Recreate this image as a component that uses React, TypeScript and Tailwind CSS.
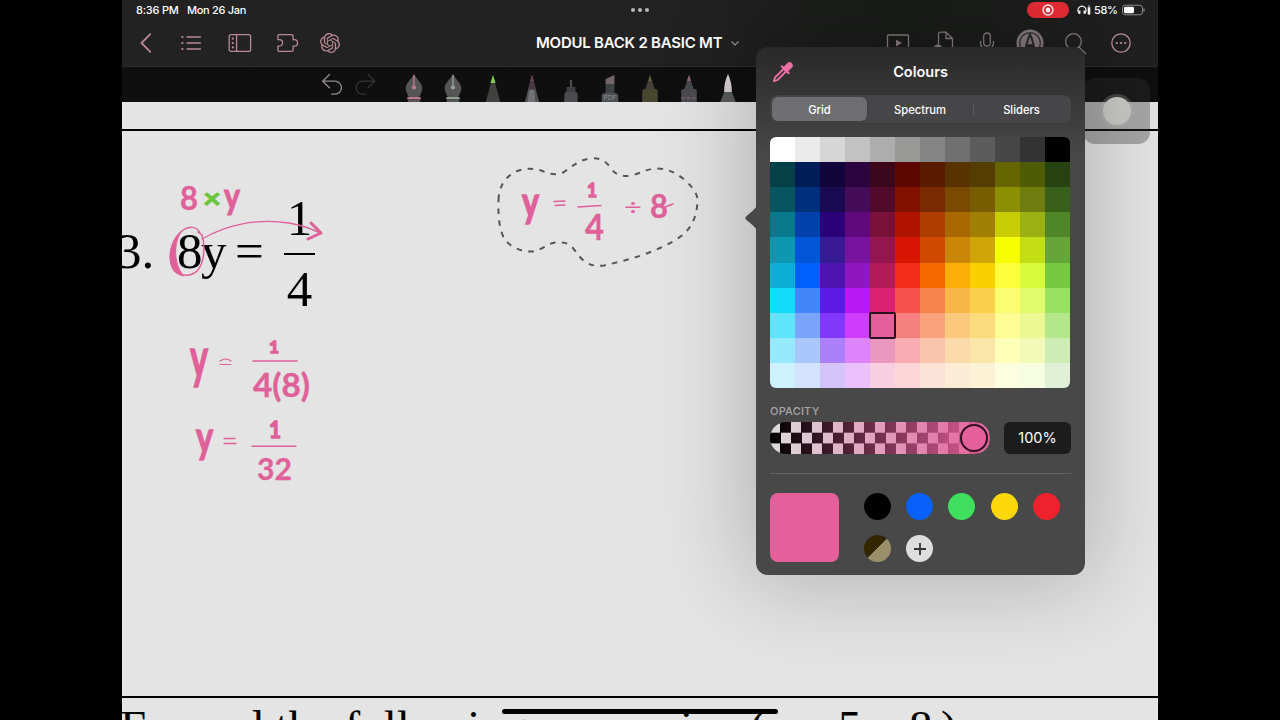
import type { ReactNode } from 'react'
import { SiOpenai } from 'react-icons/si'

const gridColors = [
  ['#ffffff', '#ebebeb', '#d6d6d6', '#c2c2c2', '#adadad', '#999997', '#858585', '#707070', '#5c5c5c', '#464646', '#333333', '#000000'],
  ['#053f47', '#001d57', '#11053b', '#2c053e', '#3a071b', '#5c0700', '#591c00', '#583300', '#533d00', '#666601', '#4e5c05', '#264210'],
  ['#07565f', '#002f7b', '#1a0a52', '#450d59', '#510a29', '#821100', '#7b2900', '#7a4a00', '#785d00', '#8d8f02', '#6f7c0e', '#38601a'],
  ['#08788c', '#0042a9', '#2c0077', '#60097d', '#791038', '#b01200', '#ad3e00', '#a96800', '#a17f04', '#c8cc03', '#9bb012', '#4f8628'],
  ['#0c98b0', '#0056d6', '#371a94', '#7a12a0', '#95154f', '#d81403', '#d14a00', '#cb8507', '#d0a508', '#f5ff00', '#c3de15', '#66a537'],
  ['#0caed6', '#0061fe', '#4d13b3', '#9016bf', '#b51a58', '#f22c17', '#f56900', '#fcaf08', '#f9d000', '#feff3a', '#d7fb3a', '#76c83f'],
  ['#12ddf8', '#4386fb', '#5a1ae3', '#b819f3', '#dc2073', '#f5524d', '#f4834e', '#f8b747', '#fad04a', '#fdfb70', '#e2fb6d', '#97e35f'],
  ['#5ee5fb', '#79a6fb', '#8238fb', '#cf3cfb', '#e5609b', '#f6807f', '#f9a37d', '#fac97d', '#fbdc7d', '#fffc94', '#ecf993', '#b3e78a'],
  ['#95ebfd', '#a9c6fb', '#ab80f8', '#dd83fb', '#ea98bd', '#f9adb3', '#fac5ac', '#fadaa9', '#fbe6a9', '#feffb8', '#f2fab8', '#cdedb5'],
  ['#cdf2fd', '#d3e2fd', '#d5c4fb', '#ebc1fd', '#f6cfe0', '#fbd6d8', '#fbe2d6', '#fcecd5', '#fcf2d5', '#fdfde0', '#f7fde0', '#e0f0d5'],
]

const selected = { row: 7, col: 4 }

function Icon({ className, children }: { className?: string; children: ReactNode }) {
  return (
    <svg
      viewBox="0 0 24 24"
      fill="none"
      stroke="currentColor"
      strokeWidth={1.3}
      strokeLinecap="round"
      strokeLinejoin="round"
      className={`w-6 h-6 shrink-0 ${className ?? ''}`}
    >
      {children}
    </svg>
  )
}

function StatusBar() {
  return (
    <div className="relative flex items-center h-5 text-[11px] text-white font-medium">
      <span className="ml-[14px] w-[43px] tracking-[-0.2px] whitespace-nowrap">8:36 PM</span>
      <span className="ml-2 w-[62px] tracking-[-0.3px] whitespace-nowrap">Mon 26 Jan</span>
      <div className="ml-[382px] flex gap-[3px]">
        <span className="w-1 h-1 rounded-full bg-[#b9b9b9]" />
        <span className="w-1 h-1 rounded-full bg-[#b9b9b9]" />
        <span className="w-1 h-1 rounded-full bg-[#b9b9b9]" />
      </div>
      <div className="ml-[378px] w-[42px] h-4 rounded-full bg-[#e92c35] flex items-center justify-center">
        <svg viewBox="0 0 12 12" className="w-3 h-3">
          <circle cx="6" cy="6" r="5" fill="none" stroke="white" strokeWidth="1.3" />
          <circle cx="6" cy="6" r="2.4" fill="white" />
        </svg>
      </div>
      <svg viewBox="0 0 14 12" className="ml-2 w-[14px] h-3" fill="none" stroke="white">
        <path d="M2.6 9.6A4.1 4.1 0 1 1 7.4 9.6" strokeWidth="1.2" />
        <path d="M2.5 6.6v3.2M7.5 6.6v3.2" strokeWidth="1.9" />
        <path d="M12 3.2v7.4" strokeWidth="2.6" />
        <path d="M12 1.4v1" strokeWidth="1.4" />
      </svg>
      <span className="ml-[3px] w-6 tracking-[-0.3px]">58%</span>
      <svg viewBox="0 0 24 12" className="ml-1 w-6 h-3">
        <rect x="0.5" y="1.2" width="20" height="9.6" rx="2.6" fill="none" stroke="#8a8a8a" />
        <rect x="2" y="2.7" width="10" height="6.6" rx="1.4" fill="white" />
        <path d="M22 4.5v3" stroke="#8a8a8a" strokeWidth="1.2" />
      </svg>
    </div>
  )
}

function NavBar() {
  return (
    <div className="flex items-center h-[46px] text-[#b98894]">
      <Icon className="ml-3">
        <path d="M16.3 3.2 7.5 12l8.8 8.8" strokeWidth={1.8} />
      </Icon>
      <Icon className="ml-[21px]">
        <path d="M8 6h13.5M8 12h13.5M8 18h13.5" />
        <path d="M3.4 6h.1M3.4 12h.1M3.4 18h.1" strokeWidth={2.2} />
      </Icon>
      <Icon className="ml-[25px]">
        <rect x="1.2" y="3.6" width="21.4" height="16.8" rx="2" />
        <path d="M8.6 3.6v16.8" />
        <path d="M4.8 7.6h.1M4.8 12h.1M4.8 16.4h.1" strokeWidth={2.2} />
      </Icon>
      <Icon className="ml-6">
        <path d="M3.4 3.6h12.2q1.5 0 1.5 1.5v3.6h1.2a3 3 0 0 1 0 6.4h-1.2v3.8q0 1.5-1.5 1.5H3.4q-1.5 0-1.5-1.5v-3.8h1.5a3.2 3.2 0 0 0 0-6.4H1.9V5.1q0-1.5 1.5-1.5Z" />
      </Icon>
      <SiOpenai className="ml-[18px] w-6 h-5 shrink-0" />
      <h1 className="ml-[194px] w-[187px] text-[15px] font-semibold text-white whitespace-nowrap tracking-[-0.24px]">
        MODUL BACK 2 BASIC MT
      </h1>
      <svg viewBox="0 0 12 12" className="ml-[6px] w-3 h-3" fill="none" stroke="#999" strokeWidth="1.1">
        <path d="M2.5 4.5 6 8l3.5-3.5" />
      </svg>
      <div className="flex items-center text-[#85797c]">
        <Icon className="ml-[145px]">
          <rect x="1.5" y="4" width="21" height="16" rx="1" />
          <path d="m10 8.5 6 3.5-6 3.5z" fill="currentColor" stroke="none" />
        </Icon>
        <Icon className="ml-[21px]">
          <path d="M7.5 13V3Q7.5 1.2 9.3 1.2H15l6.5 6.3V20H9" />
          <path d="M15 1.2v6.3h6.5" />
          <circle cx="7" cy="18" r="4.5" fill="currentColor" stroke="none" />
        </Icon>
        <Icon className="ml-5">
          <rect x="8.7" y="2" width="6.6" height="13" rx="3.3" />
          <path d="M5.5 10.5v1.5a6.5 6.5 0 0 0 13 0v-1.5M12 18.5V22" />
        </Icon>
        <svg viewBox="0 0 28 28" className="ml-[17px] w-7 h-7 shrink-0">
          <circle cx="14" cy="14" r="13.5" fill="currentColor" />
          <circle cx="14" cy="14" r="10.3" fill="none" stroke="#262626" strokeWidth="1.1" />
          <path d="M8.8 22 12.5 8.5 14 5.5l1.5 3L19.2 22" fill="none" stroke="#262626" strokeWidth="2" />
          <path d="M10.8 16q3.2-2 6.4 0v6h-6.4z" fill="#262626" />
        </svg>
        <Icon className="ml-[19px]">
          <circle cx="10.5" cy="10.5" r="7.8" />
          <path d="m16.2 16.2 6.5 6.5" />
        </Icon>
        <Icon className="ml-[22px] text-[#b98f99]">
          <circle cx="12" cy="12" r="9.2" />
          <path d="M7.8 12h.1M12 12h.1M16.2 12h.1" strokeWidth={2.2} />
        </Icon>
      </div>
    </div>
  )
}

function Fountain({ accent }: { accent: string }) {
  return (
    <>
      <path d="M10 0C8 5 2.5 9 2.5 14q0 4 3 9h9q3-5 3-9C17.5 9 12 5 10 0Z" fill="#555557" />
      <path d="M10 1v12" stroke={accent} strokeWidth="1.3" />
      <circle cx="10" cy="13.5" r="2" fill={accent} />
      <path d="M4 23h12v2.5H4z" fill={accent} />
      <path d="M4.5 26h11v2h-11z" fill="#555557" />
    </>
  )
}

const pens: ReactNode[] = [
  <Fountain accent="#b9798d" />,
  <Fountain accent="#8fa08f" />,
  <>
    <path d="M10 1 3.5 28h13z" fill="#3f413e" />
    <path d="m10 1-2.3 8h4.6z" fill="#86c95b" />
  </>,
  <>
    <path d="m10 1-6.5 27h13z" fill="#505054" />
    <path d="M7.5 16h4.5l1 12H6z" fill="#707175" />
    <path d="M10 1 6.5 16l3.5-1 3.5 1z" fill="#4b3a45" />
    <path d="m10 1-1.8 6h3.6z" fill="#6d3f55" />
  </>,
  <>
    <path d="M9 6h2v7H9z" fill="#4b4b4f" />
    <path d="M6 13h8v5H6z" fill="#3e3f43" />
    <path d="M4 28v-8q0-2 2-2h8q2 0 2 2v8z" fill="#4a4a4f" />
  </>,
  <>
    <path d="m6 5 8-4v9H6z" fill="#75656a" />
    <path d="M6 10h8v10H6z" fill="#3d4144" />
    <path d="M2.5 28v-6q0-3 3.5-3h8q3.5 0 3.5 3v6z" fill="#4d5054" />
    <text x="10" y="26.5" fontSize="6" textAnchor="middle" fill="#8d9094">PDF</text>
  </>,
  <>
    <path d="m10 1-4.5 15h9z" fill="#44413a" />
    <path d="M10 1 8.5 7h3z" fill="#666035" />
    <path d="M3 28V17q0-2 2-2h10q2 0 2 2v11z" fill="#47462f" />
  </>,
  <>
    <path d="m10 1-4.5 15h9z" fill="#48484d" />
    <path d="m10 1-2 6h4z" fill="#8b6573" />
    <path d="M3 28V17q0-2 2-2h10q2 0 2 2v11z" fill="#4a4a50" />
    <path d="M3 24h14" stroke="#b06b84" strokeWidth="1" strokeDasharray="3 2" />
  </>,
  <>
    <path d="M10 0Q6.5 8 6.5 18h7Q13.5 8 10 0Z" fill="#d8cfd1" />
    <path d="M6.5 18h7l3.5 10H3z" fill="#58595a" />
  </>,
]

function Toolbar() {
  return (
    <div className="flex h-9 bg-[#0f0f0f] border-t border-[#2c2c2c]">
      <Icon className="ml-[198px] mt-[5px] text-[#938b90]">
        <path d="M9.5 2.5 2.7 9.2l6.8 6.6M2.7 9.2H15a6.4 6.4 0 0 1 0 12.9h-3.5" />
      </Icon>
      <Icon className="ml-[10px] mt-[5px] text-[#343434]">
        <path d="m14 2.5 6.8 6.7L14 15.8M20.8 9.2H8.5a6.4 6.4 0 0 0 0 12.9H12" />
      </Icon>
      <div className="ml-[26px] flex items-end gap-[19.3px]">
        {pens.map((pen, i) => (
          <svg key={i} viewBox="1 0 18 28" className="w-5 h-[28px]" preserveAspectRatio="none">
            {pen}
          </svg>
        ))}
      </div>
    </div>
  )
}

// x and y give the left edge and the baseline, w the advance width
function Ink({ x, y, w, size, bold = 1, color = '#e0609a', children }: { x: number; y: number; w: number; size: number; bold?: number; color?: string; children: string }) {
  return (
    <text x={x} y={y} fontSize={size} textLength={w} lengthAdjust="spacingAndGlyphs" fill={color} stroke={color} strokeWidth={bold}>
      {children}
    </text>
  )
}

function InkLayer() {
  return (
    <svg
      viewBox="122 102 1036 618"
      className="absolute inset-0 w-full h-full font-['Lato',sans-serif] font-bold"
      fill="none"
      stroke="#e0609a"
      strokeLinecap="round"
    >
      <Ink x={180} y={209.5} w={18} size={32} bold={0.3}>8</Ink>
      <Ink x={203} y={207.5} w={18} size={27} color="#6cc63c">×</Ink>
      <Ink x={224} y={208.5} w={16} size={36}>y</Ink>
      <path
        d="M200 233C197 226 189 226 183 230C173 237 169 252 171 263C174 277 189 278 197 271C205 263 205 245 202 235L198 232"
        strokeWidth="1.5"
      />
      <path d="M181 232C170 241 167 259 173 269C176 274 180 275 184 276C175 267 172 246 181 232Z" fill="#e0609a" />
      <path d="M202 239C226 225 257 218 289 223Q306 226 320 233" strokeWidth="1.3" />
      <path d="m311 223 10 10-13 6" strokeWidth="3" strokeLinejoin="round" />

      <Ink x={190} y={378} w={18} size={55} bold={1.4}>y</Ink>
      <path d="M220 361q6-4 11 0M220 364.5h11" strokeWidth="1.2" />
      <Ink x={269} y={353} w={10} size={17} bold={1.4}>1</Ink>
      <path d="M253 361h44" strokeWidth="1.5" />
      <Ink x={253} y={396.5} w={57} size={33} bold={0.4}>4(8)</Ink>

      <Ink x={196} y={452.5} w={17} size={44} bold={1.4}>y</Ink>
      <path d="M224 438.5h11M224 443.5h12" strokeWidth="1.4" />
      <Ink x={269} y={438} w={12} size={23} bold={1.4}>1</Ink>
      <path d="M252 446.3h44" strokeWidth="1.5" />
      <Ink x={257} y={479.5} w={35} size={31} bold={0.3}>32</Ink>

      <Ink x={522} y={217} w={17} size={42} bold={1.4}>y</Ink>
      <path d="m554 201.5 11-.5M555 205.5l10-.5" strokeWidth="1.3" />
      <Ink x={587} y={196.5} w={10} size={18} bold={1.4}>1</Ink>
      <path d="m578 207 23-1.5" strokeWidth="1.5" />
      <Ink x={585} y={240} w={19} size={37} bold={0.3}>4</Ink>
      <g className="font-normal">
        <Ink x={624} y={215} w={18} size={23} bold={0}>÷</Ink>
      </g>
      <Ink x={650} y={218} w={18} size={33} bold={0.3}>8</Ink>
      <path d="m665 207 8-3" strokeWidth="1.5" />

      <path
        d="M498.5 200C499 187 504 179 513 173C524 167 536 168 545 172C552 175 558 175 564 172C573 166 579 160 590 158.5C601 157 606 162 611 168C615 175 622 177 632 175.5C641 173 648 168.5 657 168.5C671 169 679 175 687 182C695 190 698 195 697.5 203C696 218 692 226 684 234C674 242 661 248 648 253C635 258 619 262 604 265.5C592 267 585 263 580 257C573 249 572 243 561 242.5C548 241 544 250 532 251.5C521 252 511 247 505 240C499 230 498 215 498.5 200Z"
        stroke="#55555a"
        strokeWidth="2"
        strokeDasharray="5.5 6.3"
        strokeLinecap="butt"
      />
    </svg>
  )
}

function Worksheet() {
  return (
    <div className="relative h-[618px] overflow-hidden bg-[#e4e4e4] text-black font-['Liberation_Serif',serif] whitespace-nowrap">
      <div className="h-[29px] border-b-2 border-black" />
      <div className="h-[567px] pt-[62px] border-b-2 border-black flex items-start text-[51px] leading-none">
        <span className="-ml-[6px] mt-[33px] w-[61px]">3.</span>
        <span className="mt-[33px] w-[58px] tracking-[-1.5px]">8y</span>
        <span className="mt-[33px] w-[49px]">=</span>
        <div className="flex flex-col items-center w-[31px]">
          <span>1</span>
          <span className="mt-[9px] w-full h-0.5 bg-black" />
          <span className="mt-[9px]">4</span>
        </div>
      </div>
      <div className="-ml-[2px] flex text-[47px] leading-[1.26]">
        <span className="w-[630px]">Expand the following expression</span>
        <span className="w-[88px]">(</span>
        <span className="w-[71px]">5</span>
        <span className="w-[32px]">8</span>
        <span>)</span>
      </div>
      <InkLayer />
    </div>
  )
}

function ColourPopover() {
  return (
    <div className="absolute left-[634px] top-[47px] w-[329px] h-[528px] rounded-xl bg-linear-to-b from-[#292929] to-[#484848] to-[110px] shadow-[0_0_90px_10px_rgba(0,0,0,0.22)] px-[14px] text-white">
      <svg viewBox="0 0 13 26" className="absolute -left-[12px] top-[158px] w-[13px] h-[26px]" fill="#484848">
        <path d="M13 0v26Q12 23 9 20.5L2 14.5Q.5 13 2 11.5L9 5.5Q12 3 13 0Z" />
      </svg>
      <div className="relative h-12 flex items-center justify-center">
        <svg viewBox="0 0 24 24" className="absolute left-[1px] top-[13px] w-6 h-6 text-[#ee6fa6]" fill="none" stroke="currentColor">
          <path d="m13 8.5-9 9-1.2 3.7L6.5 20l9-9" strokeWidth="1.8" strokeLinejoin="round" />
          <path d="m11 6.5 6.5 6.5" strokeWidth="2.4" strokeLinecap="round" />
          <path d="m15.5 8.5 3-3" strokeWidth="6.5" strokeLinecap="round" />
        </svg>
        <h2 className="pt-[2px] text-[14.5px] font-semibold">Colours</h2>
      </div>
      <div className="h-7 rounded-lg bg-[#464648] p-[2px] flex items-center text-[11.2px] font-medium text-center leading-6">
        <span className="w-[95px] h-full pt-px rounded-md bg-[#6e6e71] shadow">Grid</span>
        <span className="w-[106px] h-full pt-px">Spectrum</span>
        <span className="w-px h-3 bg-[#5a5a5c]" />
        <span className="flex-1 h-full pt-px">Sliders</span>
      </div>
      <div className="relative mt-[14px] w-[300px] h-[251px] rounded-md overflow-hidden grid grid-cols-12 grid-rows-10">
        {gridColors.map((row, r) =>
          row.map((color, c) => (
            <div key={`${r}-${c}`} className="relative" style={{ backgroundColor: color }}>
              {r === selected.row && c === selected.col && (
                <div className="absolute -inset-[1px] z-10 border-2 border-[#29101e] rounded-[2px]" />
              )}
            </div>
          ))
        )}
      </div>
      <div className="mt-[16px] h-[14px] text-[11px] leading-[14px] font-medium text-[#a5a5a5] tracking-[0.2px]">OPACITY</div>
      <div className="mt-1 flex justify-between">
        <div className="relative w-[220px] h-8 rounded-full overflow-hidden bg-[conic-gradient(#000_25%,#dcdcdc_0_50%,#000_0_75%,#dcdcdc_0)] bg-size-[21px_21.4px]">
          <div className="flex items-center justify-end w-full h-full pr-[2px] bg-linear-to-r from-[#e5609b]/0 to-[#e5609b]">
            <div className="w-7 h-7 rounded-full border-[2.5px] border-[#331021] bg-[#e5609b]" />
          </div>
        </div>
        <div className="w-[67px] h-8 rounded-md bg-[#1c1c1c] flex items-center justify-center text-[14.5px]">100%</div>
      </div>
      <div className="mt-[19px] h-px bg-[#616161]" />
      <div className="mt-[19px] flex">
        <div className="w-[69px] h-[69px] rounded-lg bg-[#e5609b]" />
        <div className="ml-[25px] grid grid-cols-5 gap-x-[15.2px] gap-y-[15px] content-start">
          <span className="w-[27px] h-[27px] rounded-full bg-black" />
          <span className="w-[27px] h-[27px] rounded-full bg-[#0861f8]" />
          <span className="w-[27px] h-[27px] rounded-full bg-[#3ee05d]" />
          <span className="w-[27px] h-[27px] rounded-full bg-[#fcd709]" />
          <span className="w-[27px] h-[27px] rounded-full bg-[#ee222c]" />
          <span className="w-[27px] h-[27px] rounded-full bg-linear-to-br from-[#332600] from-50% to-[#9b8f6b] to-50%" />
          <span className="w-[27px] h-[27px] rounded-full bg-[#dedede] flex items-center justify-center">
            <svg viewBox="0 0 12 12" className="w-3 h-3" stroke="#333" strokeWidth="1.8">
              <path d="M6 0v12M0 6h12" />
            </svg>
          </span>
        </div>
      </div>
    </div>
  )
}

export default function App() {
  return (
    <div className="w-[1280px] h-[720px] bg-black overflow-hidden flex justify-center font-['Inter',sans-serif]">
      <main className="relative w-[1036px] h-[720px] overflow-hidden">
        <div className="bg-linear-to-r from-[#222222] from-50% via-[#191c19] via-75% to-[#202020]">
          <StatusBar />
          <NavBar />
        </div>
        <Toolbar />
        <Worksheet />
        <div className="absolute left-[961px] top-[78px] w-[67px] h-[66px] rounded-xl bg-[#333]/35 flex items-center justify-center">
          <div className="w-[34px] h-[34px] rounded-full bg-[#bbb]/25 flex items-center justify-center">
            <div className="w-7 h-7 rounded-full bg-[#c9c9c5]" />
          </div>
        </div>
        <ColourPopover />
        <div className="absolute left-[380px] bottom-[6px] w-[276px] h-[5px] rounded-full bg-black" />
      </main>
    </div>
  )
}
